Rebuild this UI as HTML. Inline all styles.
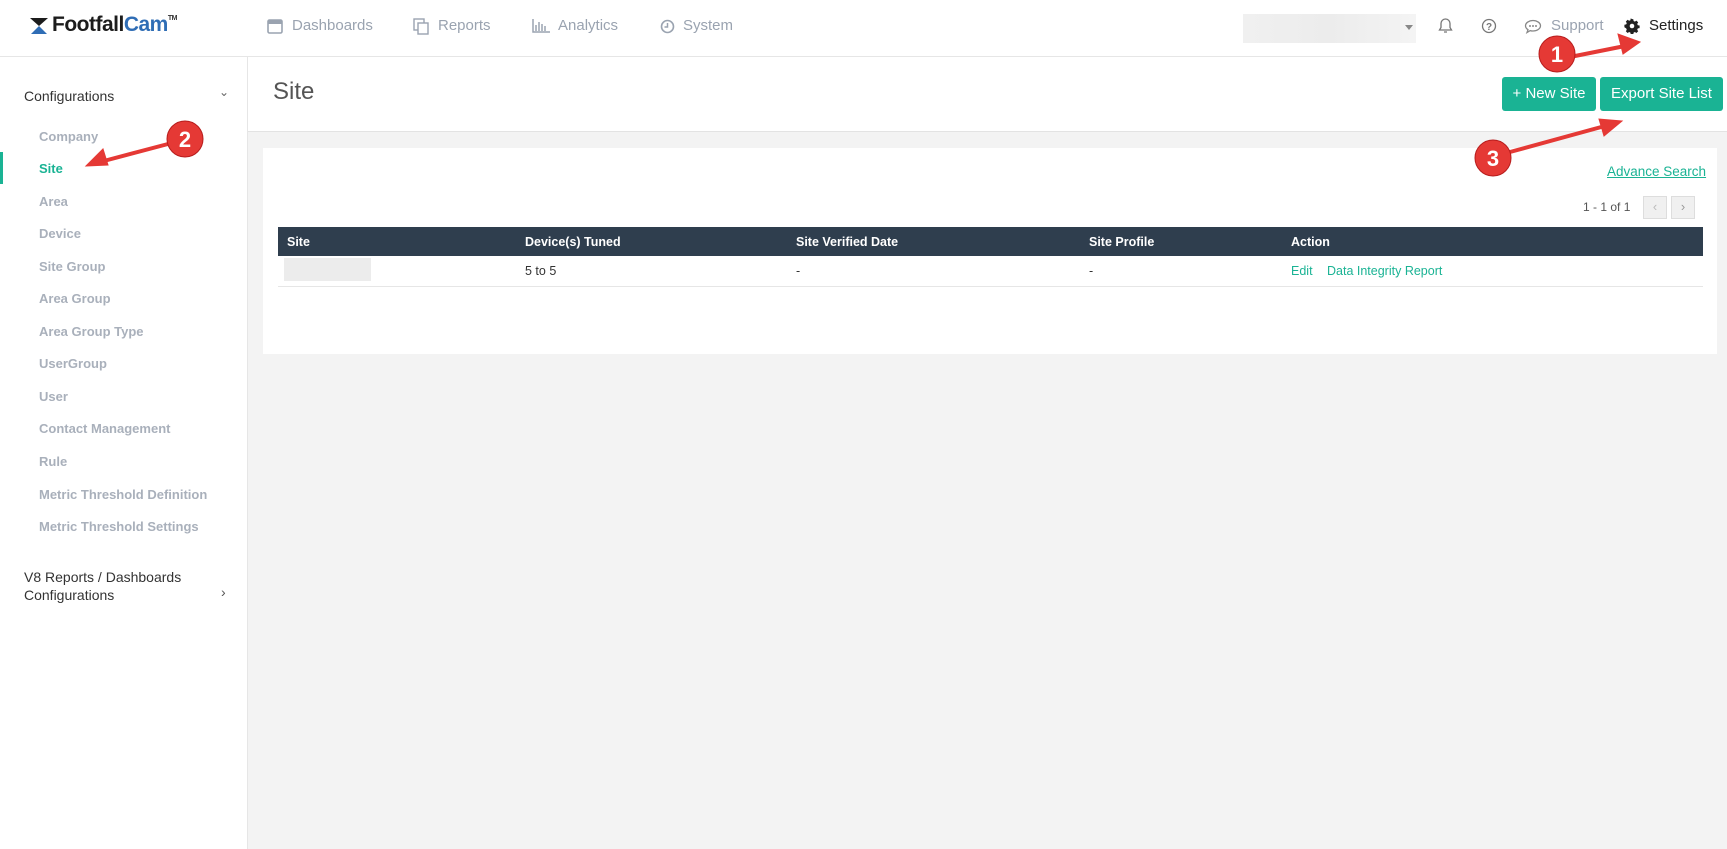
<!DOCTYPE html>
<html><head><meta charset="utf-8"><style>
*{box-sizing:border-box;margin:0;padding:0}
body{width:1727px;height:849px;overflow:hidden;background:#f3f3f3;font-family:"Liberation Sans",sans-serif;position:relative}
.a{position:absolute;white-space:nowrap}
#hdr{left:0;top:0;width:1727px;height:57px;background:#fff;border-bottom:1px solid #e6e6e6}
#side{left:0;top:57px;width:248px;height:792px;background:#fff;border-right:1px solid #e6e6e6}
#ph{left:248px;top:57px;width:1479px;height:75px;background:#fff;border-bottom:1px solid #e3e3e3}
.nav{font-size:15px;color:#9aa3b0;top:17px}
.si{font-size:13px;font-weight:bold;color:#a9b0bb;left:39px}
.btn{background:#1ab394;color:#fff;font-size:15px;border-radius:3px;text-align:center;line-height:34px;top:77px;height:34px}
.th{font-size:12.5px;font-weight:bold;color:#fff;top:235px}
.td{font-size:12.5px;color:#333;top:264px}
</style></head><body>
<div class="a" id="hdr"></div>
<!-- logo -->
<svg class="a" style="left:29px;top:17px" width="20" height="18" viewBox="0 0 20 18"><path d="M1 1h18L10 9z" fill="#1c1c1c"/><path d="M10 9L2 17h16z" fill="#2f6db5"/></svg>
<div class="a" style="left:52px;top:13px;font-size:21px;font-weight:bold;letter-spacing:-0.5px;color:#1c1c1c">Footfall<span style="color:#2f6db5">Cam</span><sup style="font-size:7px;vertical-align:top;position:relative;top:2px;color:#333">TM</sup></div>
<!-- nav -->
<svg class="a" style="left:267px;top:19px" width="16" height="15"><rect x="1" y="1" width="14" height="13" rx="1.5" fill="none" stroke="#9aa3b0" stroke-width="1.6"/><rect x="1" y="1" width="14" height="4" fill="#9aa3b0"/></svg>
<div class="a nav" style="left:292px">Dashboards</div>
<svg class="a" style="left:413px;top:18px" width="16" height="17"><rect x="1" y="1" width="10" height="11" fill="none" stroke="#9aa3b0" stroke-width="1.4"/><rect x="5" y="5" width="10" height="11" fill="#fff" stroke="#9aa3b0" stroke-width="1.4"/></svg>
<div class="a nav" style="left:438px">Reports</div>
<svg class="a" style="left:532px;top:19px" width="18" height="14"><path d="M1 0v13h17M4 12V6M7 12V3M10 12V5M13 12V7" stroke="#9aa3b0" stroke-width="1.5" fill="none"/></svg>
<div class="a nav" style="left:558px">Analytics</div>
<svg class="a" style="left:660px;top:19px" width="15" height="15"><circle cx="7.5" cy="7.5" r="6" fill="none" stroke="#9aa3b0" stroke-width="1.6"/><path d="M7.5 4v4h-3" stroke="#9aa3b0" stroke-width="1.5" fill="none"/></svg>
<div class="a nav" style="left:683px">System</div>
<!-- right -->
<div class="a" style="left:1243px;top:14px;width:173px;height:29px;background:linear-gradient(90deg,#f0f0f0,#ececec,#f4f4f4)"></div>
<div class="a" style="left:1405px;top:25px;border:4px solid transparent;border-top:5px solid #888"></div>
<svg class="a" style="left:1438px;top:17px" width="15" height="18"><path d="M7.5 2a4.5 4.5 0 0 0-4.5 4.5v4L1.5 13h12L12 10.5v-4A4.5 4.5 0 0 0 7.5 2zM6 15h3" fill="none" stroke="#777" stroke-width="1.3"/></svg>
<svg class="a" style="left:1481px;top:18px" width="16" height="16"><circle cx="8" cy="8" r="6.5" fill="none" stroke="#777" stroke-width="1.3"/><text x="8" y="12" font-size="10" font-family="Liberation Sans" font-weight="bold" text-anchor="middle" fill="#777">?</text></svg>
<svg class="a" style="left:1524px;top:19px" width="18" height="15"><path d="M9 1.5c4 0 7.5 2.4 7.5 5.3S13 12 9 12c-1 0-2-.1-2.8-.4L3 13.5l1-2.8C2.5 9.8 1.5 8.4 1.5 6.8 1.5 3.9 5 1.5 9 1.5z" fill="none" stroke="#888" stroke-width="1.3"/><circle cx="6" cy="7" r="1" fill="#888"/><circle cx="9" cy="7" r="1" fill="#888"/><circle cx="12" cy="7" r="1" fill="#888"/></svg>
<div class="a nav" style="left:1551px;color:#9aa3b0">Support</div>
<svg class="a" style="left:1624px;top:18px" width="16" height="16" viewBox="0 0 16 16"><path d="M8 1l1.3.2.3 1.8 1.3.6 1.5-1 1.8 1.8-1 1.5.6 1.3 1.8.3v2.6l-1.8.3-.6 1.3 1 1.5-1.8 1.8-1.5-1-1.3.6-.3 1.8H6.7l-.3-1.8-1.3-.6-1.5 1-1.8-1.8 1-1.5-.6-1.3L.4 9.3V6.7l1.8-.3.6-1.3-1-1.5 1.8-1.8 1.5 1 1.3-.6.3-1.8z" fill="#222"/><circle cx="8" cy="8" r="2.3" fill="#fff"/></svg>
<div class="a nav" style="left:1649px;color:#222">Settings</div>

<!-- sidebar -->
<div class="a" id="side"></div>
<div class="a" style="left:24px;top:88px;font-size:14px;color:#333">Configurations</div>
<div class="a" style="left:219px;top:85px;font-size:12px;color:#666">&#8964;</div>
<div class="a si" style="top:129px">Company</div>
<div class="a" style="left:0;top:152px;width:3px;height:32px;background:#1ab394"></div>
<div class="a si" style="top:161px;color:#1ab394">Site</div>
<div class="a si" style="top:194px">Area</div>
<div class="a si" style="top:226px">Device</div>
<div class="a si" style="top:259px">Site Group</div>
<div class="a si" style="top:291px">Area Group</div>
<div class="a si" style="top:324px">Area Group Type</div>
<div class="a si" style="top:356px">UserGroup</div>
<div class="a si" style="top:389px">User</div>
<div class="a si" style="top:421px">Contact Management</div>
<div class="a si" style="top:454px">Rule</div>
<div class="a si" style="top:487px">Metric Threshold Definition</div>
<div class="a si" style="top:519px">Metric Threshold Settings</div>
<div class="a" style="left:24px;top:568px;font-size:14px;color:#333;line-height:18px">V8 Reports / Dashboards<br>Configurations</div>
<div class="a" style="left:221px;top:584px;font-size:14px;color:#555">&#8250;</div>

<!-- page header -->
<div class="a" id="ph"></div>
<div class="a" style="left:273px;top:78px;font-size:24px;color:#555;font-weight:300">Site</div>
<div class="a btn" style="left:1502px;width:94px">+ New Site</div>
<div class="a btn" style="left:1600px;width:123px">Export Site List</div>

<!-- card -->
<div class="a" style="left:263px;top:148px;width:1454px;height:206px;background:#fff"></div>
<div class="a" style="left:1607px;top:164px;font-size:13.5px;color:#1ab394;text-decoration:underline">Advance Search</div>
<div class="a" style="left:1583px;top:200px;font-size:12px;color:#555">1 - 1 of 1</div>
<div class="a" style="left:1643px;top:196px;width:24px;height:23px;background:#f0f0f0;border:1px solid #ddd;color:#bbb;font-size:13px;text-align:center;line-height:20px">&#8249;</div>
<div class="a" style="left:1671px;top:196px;width:24px;height:23px;background:#f0f0f0;border:1px solid #ddd;color:#999;font-size:13px;text-align:center;line-height:20px">&#8250;</div>
<div class="a" style="left:278px;top:227px;width:1425px;height:29px;background:#2f3e4e"></div>
<div class="a th" style="left:287px">Site</div>
<div class="a th" style="left:525px">Device(s) Tuned</div>
<div class="a th" style="left:796px">Site Verified Date</div>
<div class="a th" style="left:1089px">Site Profile</div>
<div class="a th" style="left:1291px">Action</div>
<div class="a" style="left:284px;top:258px;width:87px;height:23px;background:#ececec"></div>
<div class="a td" style="left:525px">5 to 5</div>
<div class="a td" style="left:796px">-</div>
<div class="a td" style="left:1089px">-</div>
<div class="a td" style="left:1291px;color:#1ab394">Edit</div>
<div class="a td" style="left:1327px;color:#1ab394">Data Integrity Report</div>
<div class="a" style="left:278px;top:286px;width:1425px;height:1px;background:#e6e6e6"></div>

<!-- annotations -->
<svg class="a" style="left:0;top:0" width="1727" height="849">
<g stroke="#e53935" stroke-width="4" fill="#e53935" stroke-linecap="round">
<line x1="1575" y1="56" x2="1625" y2="46"/><path d="M1640 42l-22-8 5 20z" stroke-width="1"/>
<line x1="168" y1="144" x2="100" y2="162"/><path d="M86 166l22-1-5-16z" stroke-width="1"/>
<line x1="1510" y1="152" x2="1605" y2="126"/><path d="M1622 121l-23-2 5 17z" stroke-width="1"/>
</g>
<g fill="#e53935" stroke="#b71c1c" stroke-width="1"><circle cx="1557" cy="54" r="18"/><circle cx="185" cy="139" r="18"/><circle cx="1493" cy="158" r="18"/></g>
<g fill="#fff" font-family="Liberation Sans" font-weight="bold" font-size="22" text-anchor="middle"><text x="1557" y="62">1</text><text x="185" y="147">2</text><text x="1493" y="166">3</text></g>
</svg>
</body></html>
